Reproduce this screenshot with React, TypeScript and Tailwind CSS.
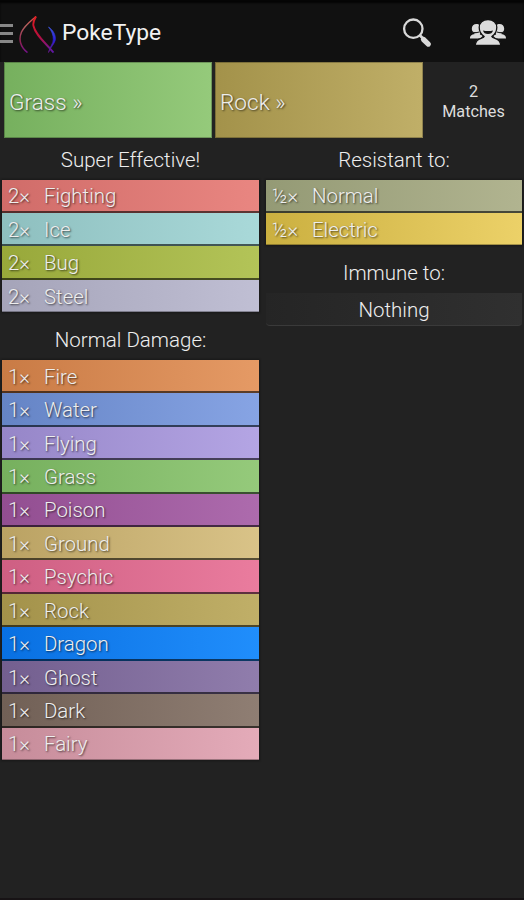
type TypeRow = {
  name: string;
  color: string;
};

const superEffective: TypeRow[] = [
  { name: "Fighting", color: "from-[#d06c69] to-[#e98681]" },
  { name: "Ice", color: "from-[#8ebfbf] to-[#a9d9d9]" },
  { name: "Bug", color: "from-[#98a83a] to-[#b3c458]" },
  { name: "Steel", color: "from-[#a5a4b9] to-[#c0bfd4]" },
];

const normalDamage: TypeRow[] = [
  { name: "Fire", color: "from-[#c97b45] to-[#e59a65]" },
  { name: "Water", color: "from-[#6584c5] to-[#87a4e4]" },
  { name: "Flying", color: "from-[#9686c8] to-[#b4a5e4]" },
  { name: "Grass", color: "from-[#76b05e] to-[#95ca7b]" },
  { name: "Poison", color: "from-[#924e91] to-[#ad6bad]" },
  { name: "Ground", color: "from-[#baa263] to-[#d9c388]" },
  { name: "Psychic", color: "from-[#ce5f83] to-[#ea7c9e]" },
  { name: "Rock", color: "from-[#a3924a] to-[#c0af68]" },
  { name: "Dragon", color: "from-[#0870e2] to-[#208efc]" },
  { name: "Ghost", color: "from-[#735f8f] to-[#907dac]" },
  { name: "Dark", color: "from-[#716056] to-[#8f7e73]" },
  { name: "Fairy", color: "from-[#c68c9a] to-[#e4abb9]" },
];

const resistant: TypeRow[] = [
  { name: "Normal", color: "from-[#949a75] to-[#b1b490]" },
  { name: "Electric", color: "from-[#cbb040] to-[#ecd168]" },
];

const textShadow = "[text-shadow:1px_1px_2px_rgba(0,0,0,0.65)]";

function TypeList({ rows, factor }: { rows: TypeRow[]; factor: string }) {
  const half = factor === "½";
  return (
    <div className="flex flex-col shadow-[0_0_2px_1px_rgba(0,0,0,0.3)]">
      {rows.map((r) => (
        <div
          key={r.name}
          className={`flex h-[33.45px] items-center border-b-2 border-black/60 bg-linear-to-r bg-origin-border pt-[3px] pl-1.5 text-[20.4px] last:h-[32px] last:border-b last:border-black/30 ${textShadow} ${r.color}`}
        >
          <span className={half ? "w-10" : "w-9"}>{factor}×</span>
          <span>{r.name}</span>
        </div>
      ))}
    </div>
  );
}

function Title({ children }: { children: string }) {
  return (
    <h2 className="flex h-10 items-center justify-center pt-px text-[20.5px]">
      {children}
    </h2>
  );
}

function Tile({ name, color }: { name: string; color: string }) {
  return (
    <button
      className={`flex h-[76px] w-[208px] items-center border border-black/25 bg-linear-to-r bg-origin-border pt-[5px] pl-1 text-[22.6px] ${textShadow} ${color}`}
    >
      {name} »
    </button>
  );
}

function FlameLogo() {
  return (
    <svg width="40" height="40" viewBox="0 0 40 40" fill="none" className="shrink-0">
      <defs>
        <linearGradient id="flameLeft" x1="0" y1="0" x2="0" y2="1">
          <stop offset="0" stopColor="#d8443f" />
          <stop offset="0.25" stopColor="#b5625f" />
          <stop offset="0.7" stopColor="#8e2352" />
          <stop offset="1" stopColor="#74118a" />
        </linearGradient>
        <linearGradient id="flameMid" x1="0" y1="0" x2="0" y2="1">
          <stop offset="0" stopColor="#e31c20" />
          <stop offset="0.55" stopColor="#b8103c" />
          <stop offset="1" stopColor="#5b18a8" />
        </linearGradient>
        <linearGradient id="flameRight" x1="0" y1="0" x2="0" y2="1">
          <stop offset="0" stopColor="#3d55d8" />
          <stop offset="0.5" stopColor="#2a20dc" />
          <stop offset="1" stopColor="#6a168c" />
        </linearGradient>
      </defs>
      <path
        d="M19 3.500C14 8 8 12 4.500 19C1.500 26 3 34 10.500 39.500"
        stroke="url(#flameLeft)"
        strokeWidth="1.500"
      />
      <path
        d="M19 3.500C17 7 15.500 9.500 16.500 13C18.500 22 28 29.500 36.500 39.500"
        stroke="url(#flameMid)"
        strokeWidth="1.900"
      />
      <path
        d="M31.500 14C36 17 39 22 38.300 27C37.500 31 33.500 34 31.500 39.500C32.500 34 36.500 30.500 36.300 26.500C36.500 22 34.500 17.500 31.500 14z"
        fill="url(#flameRight)"
        stroke="url(#flameRight)"
        strokeWidth="0.700"
      />
    </svg>
  );
}

function SearchIcon() {
  return (
    <svg width="30" height="30" viewBox="0 0 30 30" fill="none" stroke="#d8d8d8">
      <circle cx="11.300" cy="10.700" r="9.200" strokeWidth="2.300" />
      <path d="M17.800 17.200l4 4" strokeWidth="2.800" />
      <path d="M21.500 21.500l4.800 4.600" strokeWidth="5.200" strokeLinecap="round" />
    </svg>
  );
}

function GroupIcon() {
  return (
    <svg width="38" height="28" viewBox="0 0 38 28" fill="#dcdcdc">
      <path d="M7.500 5c3 0 5 2.200 5 5.500 0 2-.8 3.600-1.700 4.900l3.200 1.200-2.600 3H1c0-3.200 1.300-3.800 5-4.600C4 13.500 2.800 12 2.800 9.800 2.800 6.800 4.700 5 7.500 5z" />
      <path d="M30.500 5c-3 0-5 2.200-5 5.500 0 2 .8 3.600 1.700 4.900L24 16.600l2.600 3H37c0-3.200-1.300-3.800-5-4.600 2-1.500 3.200-3 3.200-5.200C35.200 6.800 33.300 5 30.500 5z" />
      <path
        d="M19 .5c5.300 0 8.800 3.200 8.800 7.800 0 4.200-2.300 7.700-5 9.200.2 1.100 1.500 1.300 3.200 1.800 4.200 1.200 5.500 3 5.800 7H6.200c.3-4 1.600-5.800 5.800-7 1.700-.5 3-.7 3.200-1.800-2.700-1.500-5-5-5-9.200C10.200 3.700 13.700.5 19 .5z"
        stroke="#111"
        strokeWidth="1.300"
      />
      <path d="M3 13c2 .8 5 .8 7 0M28 13c2 .8 5 .8 7 0" stroke="#222" strokeWidth="1.300" fill="none" />
      <path d="M14 11.500c3 .7 7 .7 10 0-.5 2.400-2.300 3.500-5 3.500s-4.500-1.100-5-3.500z" fill="#151515" />
    </svg>
  );
}

export default function App() {
  return (
    <div className="flex h-[900px] w-[524px] flex-col overflow-hidden border-b-2 border-[#171315] bg-[#222] font-['Roboto',sans-serif] font-light text-[#eee]">
      <header className="flex h-[62px] items-center bg-[#111] pt-1 shadow-[inset_0_3px_2px_#050505]">
        <button className="flex flex-col gap-[5px]" aria-label="Menu">
          <span className="h-[3px] w-[13px] bg-[#888]" />
          <span className="h-[3px] w-[13px] bg-[#888]" />
          <span className="h-[3px] w-[13px] bg-[#888]" />
        </button>
        <div className="ml-1">
          <FlameLogo />
        </div>
        <h1 className="ml-[5px] pt-px text-[22.8px] font-normal text-[#f2f2f2]">PokeType</h1>
        <div className="ml-auto flex items-center gap-[37px] pr-[17px]">
          <button aria-label="Search">
            <SearchIcon />
          </button>
          <button aria-label="Group">
            <GroupIcon />
          </button>
        </div>
      </header>

      <div className="flex gap-[3px] pl-1">
        <Tile name="Grass" color="from-[#76b05e] to-[#95ca7b]" />
        <Tile name="Rock" color="from-[#a3924a] to-[#c0af68]" />
        <div className="flex flex-1 flex-col items-center justify-center pt-1 pr-[3px] text-[16.2px] leading-5 font-normal text-[#ddd]">
          <span>2</span>
          <span>Matches</span>
        </div>
      </div>

      <main className="flex gap-[7px] px-0.5 pt-[1.5px]">
        <section className="w-[257px]">
          <Title>Super Effective!</Title>
          <TypeList rows={superEffective} factor="2" />
          <div className="pt-2">
            <Title>Normal Damage:</Title>
          </div>
          <TypeList rows={normalDamage} factor="1" />
        </section>

        <section className="w-[256px]">
          <Title>Resistant to:</Title>
          <TypeList rows={resistant} factor="½" />
          <div className="pt-2">
            <Title>Immune to:</Title>
          </div>
          <div className="flex h-[33px] items-center justify-center rounded-b border-b border-[#3a3a3a] bg-linear-to-r from-[#252525] to-[#303030] pt-0.5 text-[20.5px]">
            Nothing
          </div>
        </section>
      </main>
    </div>
  );
}
